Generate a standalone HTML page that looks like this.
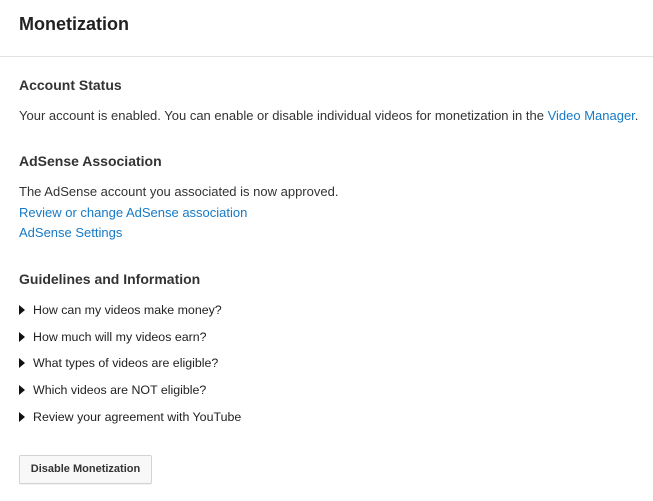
<!DOCTYPE html>
<html><head><style>
body{margin:0;width:653px;height:501px;background:#fff;font-family:"Liberation Sans",Arial,sans-serif;color:#333;position:relative;overflow:hidden}
.a{position:absolute;left:19px;white-space:nowrap;font-size:13px;line-height:16px}
h1{position:absolute;left:19px;top:12px;margin:0;font-size:18px;line-height:24px;font-weight:bold;color:#222}
.hr{position:absolute;left:0;top:56px;width:653px;height:1px;background:#e2e2e2}
.h{font-weight:bold;font-size:14px;color:#333}
a{color:#167ac6;text-decoration:none}
.li{color:#222;font-size:12.4px}
.li:before{content:"";display:inline-block;width:0;height:0;border-left:6px solid #111;border-top:5px solid transparent;border-bottom:5px solid transparent;margin-right:8px;vertical-align:-1px}
.btn{position:absolute;left:19px;top:455px;width:131px;height:27px;border:1px solid #d3d3d3;border-radius:2px;background:#f8f8f8;box-shadow:0 1px 0 rgba(0,0,0,.05);font-size:11px;font-weight:bold;color:#333;text-align:center;line-height:27px}
</style></head><body>
<h1>Monetization</h1>
<div class="hr"></div>
<div class="a h" style="top:77px">Account Status</div>
<div class="a" style="top:108px">Your account is enabled. You can enable or disable individual videos for monetization in the <a>Video Manager</a>.</div>
<div class="a h" style="top:153px">AdSense Association</div>
<div class="a" style="top:184px">The AdSense account you associated is now approved.</div>
<div class="a" style="top:205px"><a>Review or change AdSense association</a></div>
<div class="a" style="top:225px"><a>AdSense Settings</a></div>
<div class="a h" style="top:271px">Guidelines and Information</div>
<div class="a li" style="top:302px">How can my videos make money?</div>
<div class="a li" style="top:329px">How much will my videos earn?</div>
<div class="a li" style="top:355px">What types of videos are eligible?</div>
<div class="a li" style="top:382px">Which videos are NOT eligible?</div>
<div class="a li" style="top:409px">Review your agreement with YouTube</div>
<div class="btn">Disable Monetization</div>
</body></html>
